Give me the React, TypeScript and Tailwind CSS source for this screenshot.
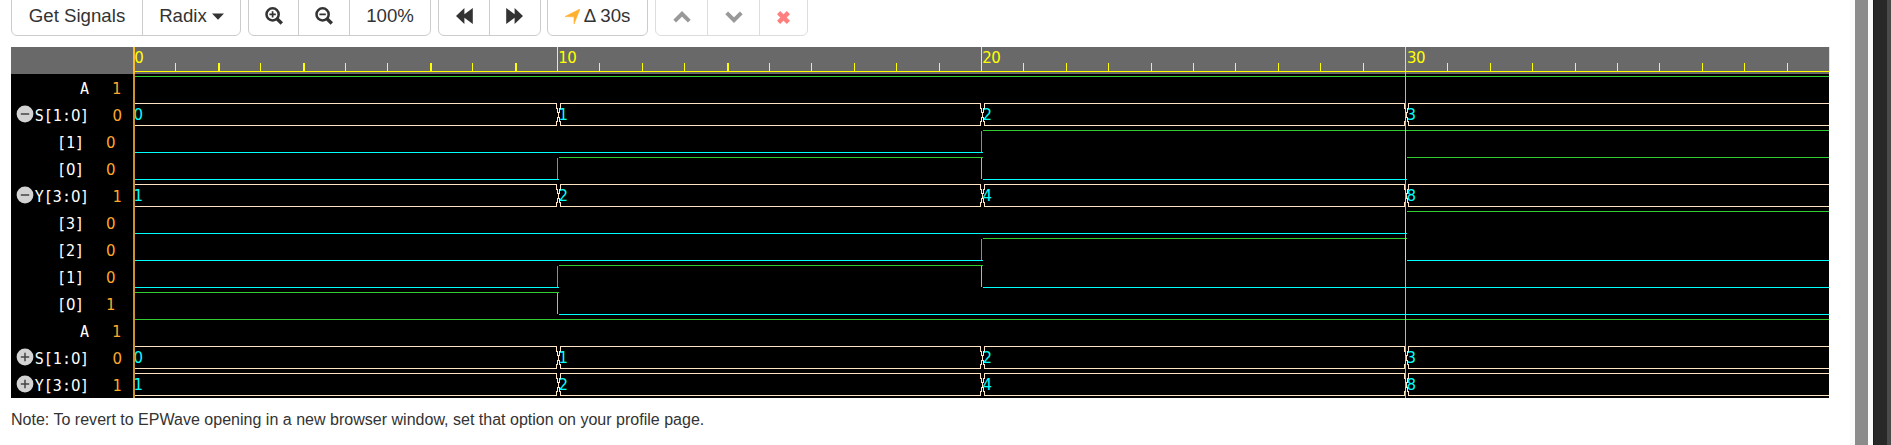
import React from "react";

type Bit = 0 | 1;
type Signal = {
  name: string;
  value: string;
  kind: "bit" | "bus";
  data: (Bit | string)[];
  nested?: boolean;
  toggle?: "open" | "closed";
};

const SIGNALS: Signal[] = [
  { name: "A", value: "1", kind: "bit", data: [1, 1, 1, 1] },
  { name: "S[1:0]", value: "0", kind: "bus", data: ["0", "1", "2", "3"], toggle: "open" },
  { name: "[1]", value: "0", kind: "bit", data: [0, 0, 1, 1], nested: true },
  { name: "[0]", value: "0", kind: "bit", data: [0, 1, 0, 1], nested: true },
  { name: "Y[3:0]", value: "1", kind: "bus", data: ["1", "2", "4", "8"], toggle: "open" },
  { name: "[3]", value: "0", kind: "bit", data: [0, 0, 0, 1], nested: true },
  { name: "[2]", value: "0", kind: "bit", data: [0, 0, 1, 0], nested: true },
  { name: "[1]", value: "0", kind: "bit", data: [0, 1, 0, 0], nested: true },
  { name: "[0]", value: "1", kind: "bit", data: [1, 0, 0, 0], nested: true },
  { name: "A", value: "1", kind: "bit", data: [1, 1, 1, 1] },
  { name: "S[1:0]", value: "0", kind: "bus", data: ["0", "1", "2", "3"], toggle: "closed" },
  { name: "Y[3:0]", value: "1", kind: "bus", data: ["1", "2", "4", "8"], toggle: "closed" },
];

const STEP = 424;
const END = 1696;
const LIME = "#32cd32";
const CYAN = "#00ffff";
const BISQUE = "#ffe4c4";
const WIDE_TICKS = [2, 4, 7, 9, 14];

/* Monospace text with a plain, undotted zero. */
function Mono({ text }: { text: string }) {
  return (
    <>
      {text.split(/(0)/).filter(Boolean).map((part, i) =>
        part === "0" ? (
          <span key={i} className="font-['DejaVu_Sans',sans-serif] tracking-[-0.5px]">0</span>
        ) : (
          part
        )
      )}
    </>
  );
}

function Toggle({ state }: { state: "open" | "closed" }) {
  return (
    <svg width="18" height="18" viewBox="0 0 18 18" className="shrink-0">
      <circle cx="9" cy="9" r="8.4" fill="#d3d3d3" />
      <path d="M4.8 9h8.4" stroke="#444" strokeWidth="1.5" />
      {state === "closed" && <path d="M9 4.8v8.4" stroke="#444" strokeWidth="1.5" />}
    </svg>
  );
}

function LabelRow({ signal }: { signal: Signal }) {
  const nameWidth = signal.nested ? "w-[73px]" : signal.name === "A" ? "w-[78px]" : "w-[78px]";
  const gap = signal.nested ? "pl-[22px]" : signal.name === "A" ? "pl-[23px]" : "pl-[23.5px]";
  return (
    <div className="flex h-[27px] items-start">
      <div className={`flex h-[27px] shrink-0 justify-end whitespace-pre ${nameWidth}`}>
        {signal.toggle && (
          <div className="mr-auto ml-[5px] w-[18px] pt-[4px]">
            <Toggle state={signal.toggle} />
          </div>
        )}
        <span className="leading-[30px] text-white"><Mono text={signal.name} /></span>
      </div>
      <span className={`leading-[30px] text-[#ffa62b] ${gap}`}><Mono text={signal.value} /></span>
    </div>
  );
}

function BitWave({ data, y }: { data: Bit[]; y: number }) {
  const parts: React.ReactNode[] = [];
  let start = 0;
  for (let i = 1; i <= 4; i++) {
    const prev = data[i - 1];
    if (i < 4 && data[i] === prev) continue;
    const from = start === 0 ? 2 : start * STEP + 2;
    const to = i === 4 ? END : i * STEP + 2;
    parts.push(
      <rect key={`h${i}`} x={from} y={prev ? y : y + 22} width={to - from} height="1" fill={prev ? LIME : CYAN} />
    );
    if (i < 4) {
      parts.push(
        <rect key={`v${i}`} x={i * STEP} y={y + 1} width="1" height="21" fill={data[i] ? LIME : CYAN} />
      );
    }
    start = i;
  }
  return <g>{parts}</g>;
}

function BusWave({ data, y }: { data: string[]; y: number }) {
  return (
    <g>
      {data.map((v, i) => {
        const from = i === 0 ? 2 : i * STEP + 3;
        const to = i === 3 ? END : (i + 1) * STEP;
        return (
          <g key={i}>
            <rect x={from} y={y} width={to - from} height="1" fill={BISQUE} />
            <rect x={from} y={y + 22} width={to - from} height="1" fill={BISQUE} />
            {i > 0 && (
              <path
                d={`M${i * STEP - 1} ${y}v5h1v4h1v5h-1v4h-1v4M${i * STEP + 3} ${y}v5h-1v4h-1v5h1v4h1v4`}
                transform="translate(.5 .5)"
                fill="none"
                stroke={BISQUE}
              />
            )}
            <text x={i === 0 ? 0.4 : i * STEP + 1.6} y={y + 17} fill={CYAN}>{v}</text>
          </g>
        );
      })}
    </g>
  );
}

function Ruler() {
  return (
    <g fill="#ffff00">
      <rect x="0" y="0" width={END} height="27" fill="#696969" />
      {Array.from({ length: 40 }, (_, k) => k).filter((k) => k % 10 !== 0).map((k) => (
        <rect key={k} x={Math.round(k * 42.4)} y="16" width={WIDE_TICKS.includes(k) ? 2 : 1} height="8" />
      ))}
      {[1, 2, 3, 4].map((k) => (
        <rect key={k} x={k * STEP} y="0" width="1" height="25" />
      ))}
      <rect x="2" y="24" width={END - 1} height="1" />
      {["0", "10", "20", "30"].map((t, i) => (
        <text key={t} x={i * STEP + (i === 3 ? 2 : 1.2)} y="16" letterSpacing="-0.5">{t}</text>
      ))}
    </g>
  );
}

function Waves() {
  return (
    <svg width="1697" height="351" viewBox="0 0 1697 351" className="shrink-0" shapeRendering="crispEdges" fontFamily="'DejaVu Sans', sans-serif" fontSize="15">
      <rect width={END} height="351" fill="#000" />
      <Ruler />
      {SIGNALS.map((s, i) =>
        s.kind === "bit" ? (
          <BitWave key={i} data={s.data as Bit[]} y={29 + i * 27} />
        ) : (
          <BusWave key={i} data={s.data as string[]} y={29 + i * 27} />
        )
      )}
      <rect x="0" y="0" width="2" height="27" fill="#ffb92e" />
      <rect x="0" y="27" width="2" height="324" fill="#cc922e" />
      <rect x={STEP * 3} y="0" width="1" height="351" fill="#d3d3d3" fillOpacity=".85" />
    </svg>
  );
}

const Magnifier = ({ plus }: { plus?: boolean }) => (
  <svg width="18" height="18" viewBox="0 0 18 18" fill="none" stroke="#333">
    <circle cx="7.6" cy="7.4" r="6.1" strokeWidth="2.5" />
    <path d="M12 11.8l4.8 4.6" strokeWidth="3.4" />
    <path d={plus ? "M4.4 7.4h6.4M7.6 4.2v6.4" : "M4.4 7.4h6.4"} strokeWidth="1.7" />
  </svg>
);

const Rewind = ({ flip }: { flip?: boolean }) => (
  <svg width="17" height="16" viewBox="0 0 17 16" fill="#333" className={flip ? "-translate-x-px -scale-x-100" : ""}>
    <path d="M0 8L8.4 0v6.2L16.8 0v16L8.4 9.8V16z" />
  </svg>
);

const Chevron = ({ down }: { down?: boolean }) => (
  <svg width="18" height="12" viewBox="0 0 18 12" fill="none" stroke="#999" className={down ? "rotate-180" : ""}>
    <path d="M1.7 10.1L9 2.9l7.3 7.2" strokeWidth="4" />
  </svg>
);

function Group({ className, children }: { className: string; children: React.ReactNode }) {
  return (
    <div className={`flex h-[46px] shrink-0 divide-x divide-[#ccc] overflow-hidden rounded-[6px] border border-[#ccc] bg-white ${className}`}>
      {children}
    </div>
  );
}

function Cell({ className, children }: { className: string; children: React.ReactNode }) {
  return (
    <button className={`flex shrink-0 items-center justify-center whitespace-nowrap pt-[10px] pb-[4px] ${className}`}>{children}</button>
  );
}

function Toolbar() {
  return (
    <div className="-mt-[10px] flex h-[46px] pl-[11px] text-[18.67px] text-[#333]">
      <Group className="w-[230px]">
        <Cell className="w-[131px]">Get Signals</Cell>
        <Cell className="w-[97px] gap-[5px]">
          Radix
          <svg width="12" height="7" viewBox="0 0 12 7"><path d="M0 .5h12L6 6.8z" fill="#333" /></svg>
        </Cell>
      </Group>
      <Group className="ml-[7px] w-[183px]">
        <Cell className="w-[50px]"><Magnifier plus /></Cell>
        <Cell className="w-[51px]"><Magnifier /></Cell>
        <Cell className="w-[80px]">100%</Cell>
      </Group>
      <Group className="ml-[7px] w-[103px]">
        <Cell className="w-[51px]"><Rewind /></Cell>
        <Cell className="w-[50px]"><Rewind flip /></Cell>
      </Group>
      <Group className="ml-[6px] w-[101px]">
        <Cell className="w-[99px] gap-[4px]">
          <svg width="15" height="15" viewBox="0 0 15 15"><path d="M15 0L9 15V7.8L0 7.6z" fill="#ffb02e" stroke="#ffb02e" strokeWidth=".6" strokeLinejoin="round" /></svg>
          Δ 30s
        </Cell>
      </Group>
      <Group className="ml-[7px] w-[153px] !divide-[#ddd] !border-[#ddd]">
        <Cell className="w-[52px] pt-[12px]"><Chevron /></Cell>
        <Cell className="w-[52px] pt-[12px]"><Chevron down /></Cell>
        <Cell className="w-[47px] pt-[12px]">
          <svg width="13" height="13" viewBox="0 0 13 13" stroke="#ff7f7f" strokeWidth="4.4"><path d="M1.6 1.6l9.8 9.8M11.4 1.6l-9.8 9.8" /></svg>
        </Cell>
      </Group>
    </div>
  );
}

export default function App() {
  return (
    <div className="flex h-[445px] w-[1891px] overflow-hidden bg-white font-['Liberation_Sans',Arial,sans-serif]">
      <main className="w-[1850px] shrink-0">
        <Toolbar />
        <section className="mt-[11px] ml-[11px] flex h-[351px]">
          <div className="w-[122px] shrink-0 bg-black font-['DejaVu_Sans_Mono',monospace] text-[15px]">
            <div className="h-[27px] bg-[#696969]" />
            {SIGNALS.map((s, i) => (
              <LabelRow key={i} signal={s} />
            ))}
          </div>
          <Waves />
        </section>
        <p className="mt-[10px] ml-[11px] text-[16.05px] leading-[22px] whitespace-nowrap text-[#333]">
          Note: To revert to EPWave opening in a new browser window, set that option on your profile page.
        </p>
      </main>
      <div className="w-[5px] shrink-0 bg-[#fafafa]" />
      <div className="w-[13px] shrink-0 bg-[#8b8b8b]" />
      <div className="w-[5px] shrink-0 bg-[#fafafa]" />
      <div className="w-[14px] shrink-0 border-l border-[#1c1c1c] bg-[#282828]" />
      <div className="w-[4px] shrink-0 bg-[#4a4a4a]" />
    </div>
  );
}
